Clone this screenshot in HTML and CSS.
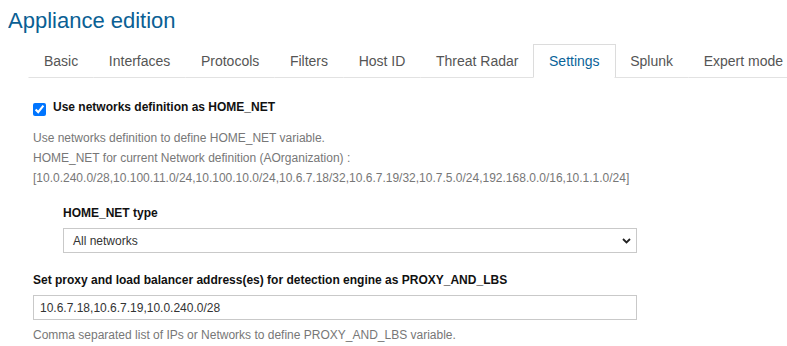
FILE: index.html
```html
<!DOCTYPE html>
<html>
<head>
<meta charset="utf-8">
<link rel="stylesheet" href="styles.css">
</head>
<body>
<h1 class="title">Appliance edition</h1>
<ul class="tabs">
  <li class="tab">Basic</li>
  <li class="tab">Interfaces</li>
  <li class="tab">Protocols</li>
  <li class="tab">Filters</li>
  <li class="tab">Host ID</li>
  <li class="tab">Threat Radar</li>
  <li class="tab active">Settings</li>
  <li class="tab">Splunk</li>
  <li class="tab">Expert mode</li>
  <li class="tab-fill"></li>
</ul>
<div class="content">
  <label class="check-row">
    <input type="checkbox" class="check" checked>
    <span class="check-label">Use networks definition as HOME_NET</span>
  </label>
  <div class="help help-top">
    <div>Use networks definition to define HOME_NET variable.</div>
    <div>HOME_NET for current Network definition (AOrganization) :</div>
    <div>[10.0.240.0/28,10.100.11.0/24,10.100.10.0/24,10.6.7.18/32,10.6.7.19/32,10.7.5.0/24,192.168.0.0/16,10.1.1.0/24]</div>
  </div>
  <div class="group indented">
    <div class="label">HOME_NET type</div>
    <div class="select">
      <span>All networks</span>
      <svg class="chevron" width="9" height="6" viewBox="0 0 9 6"><path d="M1 1 L4.5 4.5 L8 1" fill="none" stroke="#222" stroke-width="1.8"/></svg>
    </div>
  </div>
  <div class="group">
    <div class="label">Set proxy and load balancer address(es) for detection engine as PROXY_AND_LBS</div>
    <div class="input">10.6.7.18,10.6.7.19,10.0.240.0/28</div>
    <div class="help help-bottom">Comma separated list of IPs or Networks to define PROXY_AND_LBS variable.</div>
  </div>
</div>
</body>
</html>
```
FILE: styles.css
```css
body {
  margin: 8px 0 8px 8px;
  font-family: "Liberation Sans", Arial, sans-serif;
  background: #fff;
  color: #222;
}
.title {
  margin: 0;
  font-size: 22px;
  line-height: 26px;
  font-weight: normal;
  color: #0a5f94;
}
.tabs {
  list-style: none;
  margin: 10px 0 0 20px;
  padding: 0;
  display: flex;
  white-space: nowrap;
  overflow: hidden;
}
.tab {
  flex: none;
  font-size: 14px;
  line-height: 20px;
  padding: 6px 15px;
  border: 1px solid transparent;
  border-bottom-color: #e2e2e2;
  margin-right: -1.4px;
  color: #555;
}
.tab.active {
  color: #0a6399;
  border-color: #dcdcdc;
  border-bottom-color: #fff;
  background: #fff;
}
.tab-fill {
  flex: 1 0 0;
  border-bottom: 1px solid #e2e2e2;
}
.content {
  padding: 19px 0 0 25px;
  width: 604px;
}
.check-row {
  display: flex;
  align-items: flex-start;
  font-size: 12px;
  line-height: 20px;
}
.check {
  width: 13px;
  height: 13px;
  margin: 6px 7px 0 0;
  accent-color: #0075ff;
}
.check-label {
  font-weight: bold;
  color: #111;
}
.help {
  font-size: 12px;
  line-height: 20px;
  color: #777;
  white-space: nowrap;
}
.help-top {
  margin-top: 11px;
}
.group {
  margin-top: 15px;
}
.group + .group { margin-top: 17px; }
.indented {
  padding-left: 30px;
}
.label {
  font-size: 12px;
  line-height: 20px;
  font-weight: bold;
  color: #111;
}
.select, .input {
  box-sizing: border-box;
  height: 25px;
  border: 1px solid #c9c9c9;
  font-size: 12px;
  color: #333;
  display: flex;
  align-items: center;
}
.select {
  margin-top: 5px;
  padding: 0 5px 0 9px;
  justify-content: space-between;
}
.input {
  margin-top: 5px;
  padding: 0 6px;
}
.help-bottom {
  margin-top: 5px;
}
```
